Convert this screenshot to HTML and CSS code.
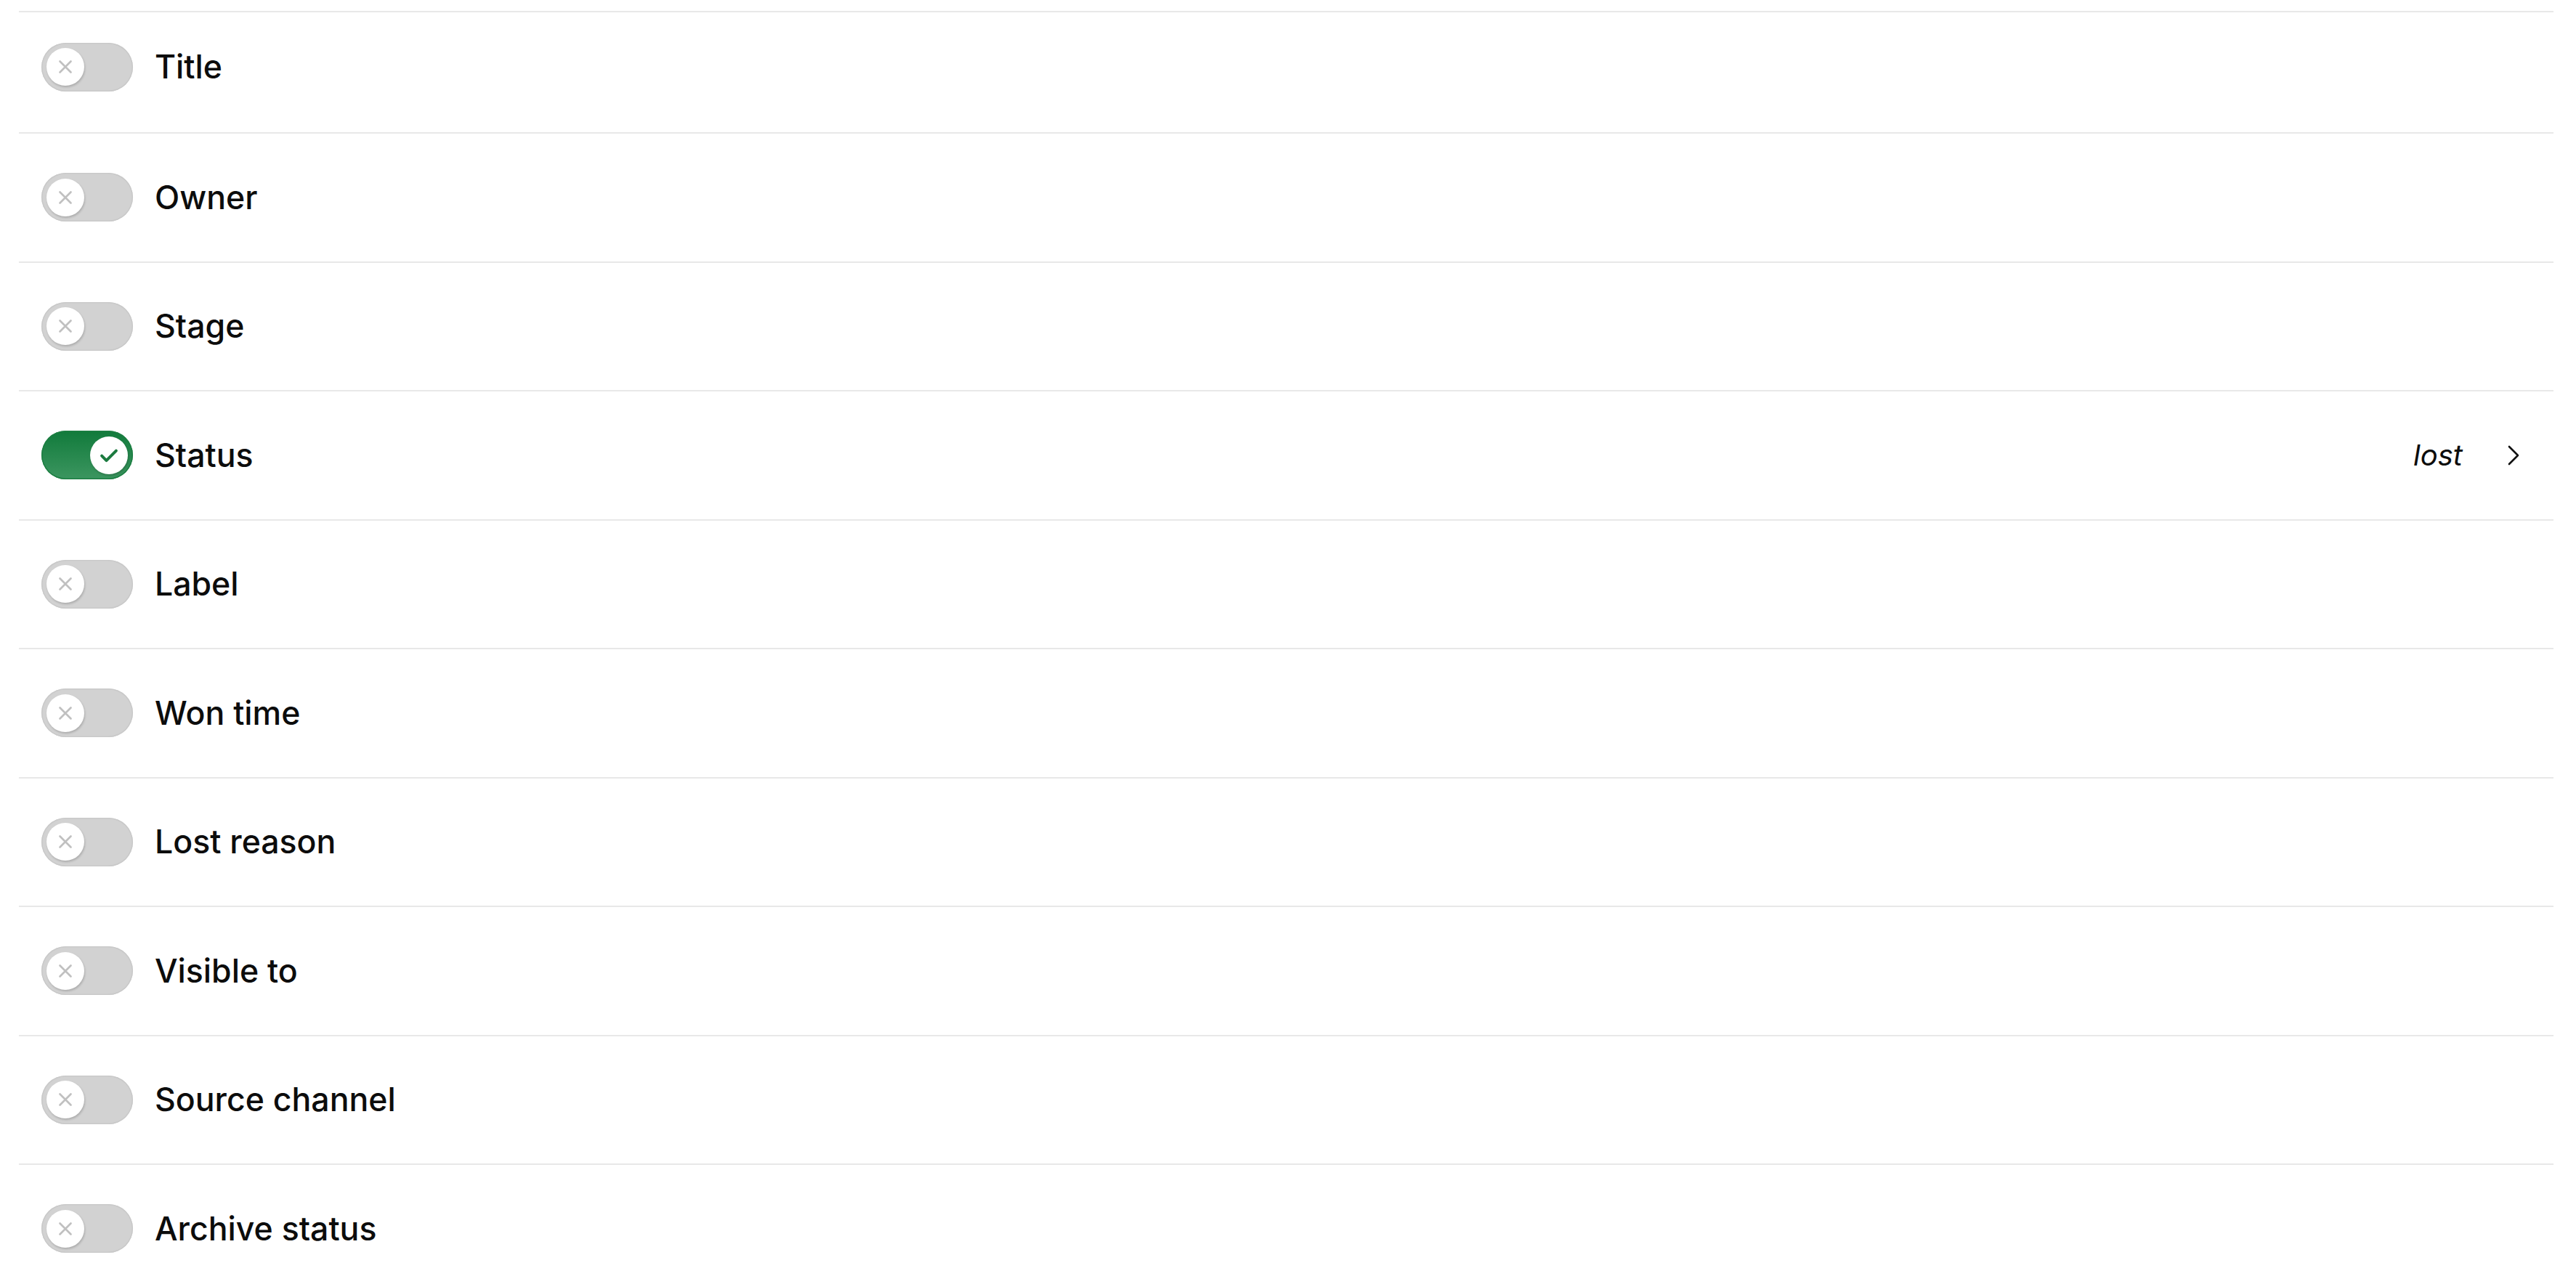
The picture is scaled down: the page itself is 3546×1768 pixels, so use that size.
FILE: index.html
```html
<!DOCTYPE html>
<html lang="en">
<head>
  <meta charset="UTF-8">
  <meta name="viewport" content="width=device-width, initial-scale=1.0">
  <title>Deal fields</title>
  <link rel="stylesheet" href="styles.css">
</head>
<body>
  <div class="field-list">
    <div class="field-row">
      <span class="toggle"><span class="knob"><svg viewBox="0 0 16 16"><path d="M3 3l10 10M13 3L3 13"/></svg></span></span>
      <span class="field-name">Title</span>
    </div>
    <div class="field-row">
      <span class="toggle"><span class="knob"><svg viewBox="0 0 16 16"><path d="M3 3l10 10M13 3L3 13"/></svg></span></span>
      <span class="field-name">Owner</span>
    </div>
    <div class="field-row">
      <span class="toggle"><span class="knob"><svg viewBox="0 0 16 16"><path d="M3 3l10 10M13 3L3 13"/></svg></span></span>
      <span class="field-name">Stage</span>
    </div>
    <div class="field-row">
      <span class="toggle on"><span class="knob"><svg viewBox="0 0 24 24"><path d="M5 12.5l4.5 4.5L19 7.5"/></svg></span></span>
      <span class="field-name">Status</span>
      <span class="field-value">lost</span>
      <svg class="chevron" viewBox="0 0 16 28"><path d="M2 2l12 12L2 26"/></svg>
    </div>
    <div class="field-row">
      <span class="toggle"><span class="knob"><svg viewBox="0 0 16 16"><path d="M3 3l10 10M13 3L3 13"/></svg></span></span>
      <span class="field-name">Label</span>
    </div>
    <div class="field-row">
      <span class="toggle"><span class="knob"><svg viewBox="0 0 16 16"><path d="M3 3l10 10M13 3L3 13"/></svg></span></span>
      <span class="field-name">Won time</span>
    </div>
    <div class="field-row">
      <span class="toggle"><span class="knob"><svg viewBox="0 0 16 16"><path d="M3 3l10 10M13 3L3 13"/></svg></span></span>
      <span class="field-name">Lost reason</span>
    </div>
    <div class="field-row">
      <span class="toggle"><span class="knob"><svg viewBox="0 0 16 16"><path d="M3 3l10 10M13 3L3 13"/></svg></span></span>
      <span class="field-name">Visible to</span>
    </div>
    <div class="field-row">
      <span class="toggle"><span class="knob"><svg viewBox="0 0 16 16"><path d="M3 3l10 10M13 3L3 13"/></svg></span></span>
      <span class="field-name">Source channel</span>
    </div>
    <div class="field-row">
      <span class="toggle"><span class="knob"><svg viewBox="0 0 16 16"><path d="M3 3l10 10M13 3L3 13"/></svg></span></span>
      <span class="field-name">Archive status</span>
    </div>
  </div>
</body>
</html>
```

FILE: styles.css
```css
body {
  margin: 0;
  background: #fff;
  font-family: Inter, "Noto Sans", sans-serif;
  color: #0c0c0c;
  overflow: hidden;
}

.field-list {
  margin: 15px 31px 0 26px;
  border-top: 2px solid #e8e8e8;
}

.field-row {
  display: flex;
  align-items: center;
  height: 175.5px;
  padding-left: 31px;
  border-bottom: 2px solid #e8e8e8;
  box-sizing: content-box;
}

.field-row:first-child {
  height: 150px;
  padding-bottom: 15px;
}

/* toggle switch */
.toggle {
  display: flex;
  align-items: center;
  width: 126px;
  height: 67px;
  padding: 0 7px;
  box-sizing: border-box;
  border-radius: 34px;
  background: #d2d2d2;
  box-shadow: inset 0 0 0 1.5px #c9c9c9;
  flex-shrink: 0;
}

.toggle.on {
  justify-content: flex-end;
  background: linear-gradient(#117a3b, #3c9660);
  box-shadow: inset 0 0 0 1.5px #1c7e42;
}

.knob {
  display: flex;
  align-items: center;
  justify-content: center;
  width: 52px;
  height: 52px;
  border-radius: 50%;
  background: #fff;
  box-shadow: 1px 2px 3px rgba(0, 0, 0, 0.18);
}

.knob svg {
  width: 24px;
  height: 24px;
  fill: none;
  stroke: #c0c0c0;
  stroke-width: 1.8;
  stroke-linecap: round;
}

.toggle.on .knob svg {
  width: 34px;
  height: 34px;
  stroke: #1b7a3f;
  stroke-width: 2.8;
  stroke-linejoin: round;
}

.field-name {
  margin-left: 30px;
  font-size: 44.6px;
  font-weight: 500;
}

.field-value {
  margin-left: auto;
  font-size: 40px;
  font-style: italic;
}

.chevron {
  width: 16px;
  height: 28px;
  margin: 0 47px 0 62px;
  fill: none;
  stroke: #111;
  stroke-width: 2.6;
  stroke-linecap: round;
  stroke-linejoin: round;
}
```
